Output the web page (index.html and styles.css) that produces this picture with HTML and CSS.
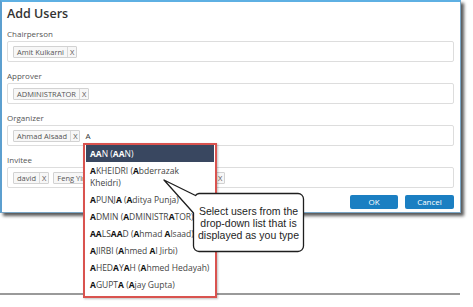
FILE: index.html
```html
<!DOCTYPE html>
<html lang="en">
<head>
    <meta charset="UTF-8">
    <title>Add Users</title>
    <link rel="stylesheet" href="styles.css">
</head>
<body>
    <div class="page">
        <div class="dialog">
            <h1 class="dialog-title">Add Users</h1>

            <div class="field">
                <label class="field-label">Chairperson</label>
                <div class="picker">
                    <span class="tag"><span class="tag-name">Amit Kulkarni</span><span class="tag-remove">X</span></span>
                </div>
            </div>

            <div class="field">
                <label class="field-label">Approver</label>
                <div class="picker">
                    <span class="tag"><span class="tag-name">ADMINISTRATOR</span><span class="tag-remove">X</span></span>
                </div>
            </div>

            <div class="field">
                <label class="field-label">Organizer</label>
                <div class="picker">
                    <span class="tag"><span class="tag-name">Ahmad Alsaad</span><span class="tag-remove">X</span></span>
                    <span class="picker-query">A</span>

                    <!-- suggestions for the typed query -->
                    <ul class="suggestions">
                        <li class="suggestion active"><b>AA</b>N (<b>AA</b>N)</li>
                        <li class="suggestion"><b>A</b>KHEIDRI (<b>A</b>bderrazak<br>Kheidri)</li>
                        <li class="suggestion"><b>A</b>PUNJ<b>A</b> (<b>A</b>ditya Punja)</li>
                        <li class="suggestion"><b>A</b>DMIN (<b>A</b>DMINISTR<b>A</b>TOR)</li>
                        <li class="suggestion"><b>AA</b>LS<b>AA</b>D (<b>A</b>hmad <b>A</b>lsaad)</li>
                        <li class="suggestion"><b>A</b>JIRBI (<b>A</b>hmed <b>A</b>l Jirbi)</li>
                        <li class="suggestion"><b>A</b>HED<b>A</b>Y<b>A</b>H (<b>A</b>hmed Hedayah)</li>
                        <li class="suggestion"><b>A</b>GUPT<b>A</b> (<b>A</b>jay Gupta)</li>
                    </ul>
                </div>
            </div>

            <div class="field">
                <label class="field-label">Invitee</label>
                <div class="picker">
                    <span class="tag"><span class="tag-name">david</span><span class="tag-remove">X</span></span>
                    <span class="tag"><span class="tag-name">Feng Yin</span><span class="tag-remove">X</span></span>
                    <span class="tag"><span class="tag-name">Ahmed Al Jirbi</span><span class="tag-remove">X</span></span>
                    <span class="tag"><span class="tag-name">Rajiv Patil</span><span class="tag-remove">X</span></span>
                </div>
            </div>

            <div class="actions">
                <button class="btn">OK</button>
                <button class="btn btn-cancel">Cancel</button>
            </div>
        </div>

        <div class="baseline-rule"></div>

        <div class="callout">
            <svg class="callout-shape" width="150" height="84" viewBox="160 174 150 84">
                <path d="M199,193.5 H298 A5.5,5.5 0 0 1 303.5,199 V246 A5.5,5.5 0 0 1 298,251.5 H199 A5.5,5.5 0 0 1 193.5,246 V213 L164,180 L195.5,195.5 A5.5,5.5 0 0 1 199,193.5 Z"
                      fill="#fff" stroke="#1e1e1e" stroke-width="1.3" stroke-linejoin="round"/>
            </svg>
            <div class="callout-text">Select users from the drop-down list that is displayed as you type</div>
        </div>
    </div>
</body>
</html>
```

FILE: styles.css
```css
body {
    margin: 0;
    font-family: "Open Sans", "DejaVu Sans", sans-serif;
    background-color: #fff;
    color: #333;
}
.page {
    position: relative;
    width: 473px;
    height: 307px;
    overflow: hidden;
}
.dialog {
    width: 461px;
    box-sizing: border-box;
    background-color: #fff;
    border: 1px solid #7aa6c6;
    border-top: 2px solid #5eb0e3;
    border-left: 2px solid #5c9fcf;
    padding: 4px 6px 3px 5px;
    box-shadow: 3px 3px 3px rgba(0, 0, 0, 0.65);
}
.dialog-title {
    margin: 0 0 6px;
    font-size: 12.5px;
    line-height: 16px;
    font-weight: 600;
    color: #333;
}
.field + .field {
    margin-top: 8px;
}
.field-label {
    display: block;
    font-size: 8px;
    line-height: 11px;
    margin-bottom: 2px;
    color: #555;
}
.picker {
    position: relative;
    display: flex;
    align-items: center;
    gap: 4px;
    height: 21px;
    box-sizing: border-box;
    border: 1px solid #dddddd;
    border-radius: 2px;
    padding: 0 5px;
}
.picker-query {
    font-size: 8px;
    color: #333;
    margin-left: 1px;
}
.tag {
    display: inline-flex;
    align-items: center;
    height: 12px;
    box-sizing: border-box;
    border: 1px solid #d2d2d2;
    border-radius: 1px;
    background-color: #f7f7f7;
    font-size: 7.5px;
    color: #555;
    white-space: nowrap;
}
.tag-name {
    padding: 0 3px;
}
.tag-remove {
    padding: 0 2px;
    line-height: 10px;
    border-left: 1px solid #d8d8d8;
}
.suggestions {
    position: absolute;
    left: 75px;
    top: 17px;
    width: 134px;
    box-sizing: border-box;
    margin: 0;
    padding: 0 1px 3px;
    list-style: none;
    background-color: #fff;
    border: 2px solid #d9534f;
    box-shadow: 1px 1px 2px rgba(0, 0, 0, 0.25);
    z-index: 2;
}
.suggestion {
    padding: 2.5px 4px;
    font-size: 8.5px;
    line-height: 12px;
    color: #444;
    white-space: nowrap;
}
.suggestion b {
    font-weight: 700;
    color: #111;
}
.suggestion.active {
    background-color: #394760;
    color: #fff;
}
.suggestion.active b {
    color: #fff;
}
.actions {
    display: flex;
    justify-content: flex-end;
    gap: 7px;
    margin-top: 7px;
}
.btn {
    width: 48px;
    height: 14px;
    padding: 0;
    border: none;
    border-radius: 2px;
    background-color: #1b7fc2;
    color: #fff;
    font-family: "Open Sans", sans-serif;
    font-size: 8px;
    line-height: 14px;
}
.btn-cancel {
    width: 49px;
}
.baseline-rule {
    width: 460px;
    height: 2px;
    margin-top: 80px;
    background-color: #9a9a9a;
}
.callout {
    position: absolute;
    left: 160px;
    top: 174px;
    width: 150px;
    height: 84px;
    z-index: 3;
}
.callout-shape {
    display: block;
}
.callout-text {
    position: absolute;
    left: 33px;
    top: 19px;
    width: 111px;
    height: 59px;
    display: flex;
    align-items: center;
    justify-content: center;
    text-align: center;
    font-family: "Liberation Sans", Arial, sans-serif;
    font-size: 10.5px;
    line-height: 12px;
    color: #1e1e1e;
}
```
